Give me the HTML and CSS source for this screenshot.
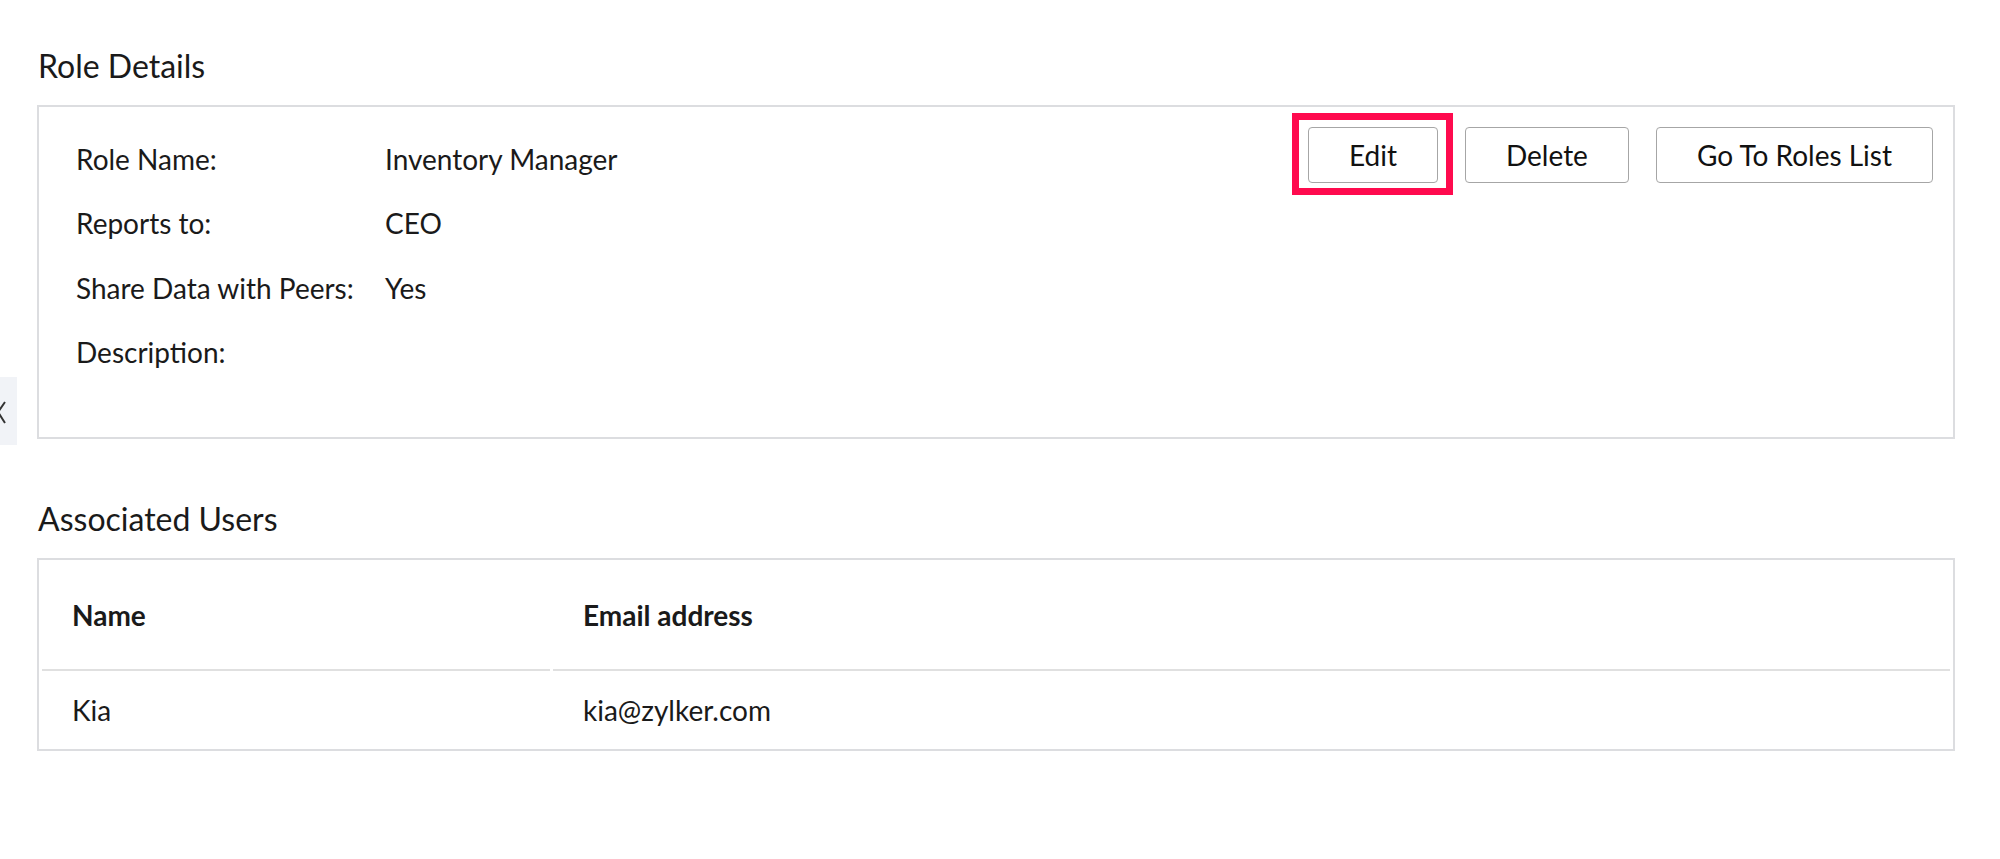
FILE: index.html
```html
<!DOCTYPE html>
<html>
<head>
<meta name="viewport" content="width=device-width, initial-scale=1">
<link rel="stylesheet" href="styles.css">
</head>
<body>

<div class="side_toggle">
  <svg width="17" height="68" viewBox="0 0 17 68">
    <path d="M5 25 L-2 35 L5 46" fill="none" stroke="#333" stroke-width="2"/>
  </svg>
</div>

<div class="page">
  <h2 class="section_title">Role Details</h2>
  <div class="card">
    <div class="details">
      <div class="label">Role Name:</div>
      <div class="value">Inventory Manager</div>
      <div class="label">Reports to:</div>
      <div class="value">CEO</div>
      <div class="label">Share Data with Peers:</div>
      <div class="value">Yes</div>
      <div class="label">Description:</div>
      <div class="value"></div>
    </div>
    <div class="actions">
      <button class="btn highlight">Edit</button>
      <button class="btn">Delete</button>
      <button class="btn">Go To Roles List</button>
    </div>
  </div>

  <h2 class="section_title users_title">Associated Users</h2>
  <table class="users">
    <thead>
      <tr>
        <th class="col_name">Name</th>
        <th>Email address</th>
      </tr>
    </thead>
    <tbody>
      <tr>
        <td>Kia</td>
        <td>kia@zylker.com</td>
      </tr>
    </tbody>
  </table>
</div>

</body>
</html>
```

FILE: styles.css
```css
body {
    margin: 0;
    font-family: Lato, "Open Sans", sans-serif;
    color: #1a1a1a;
    background: #fff;
}

.page {
    padding: 47px 45px 0 37px;
}

.section_title {
    font-size: 32px;
    font-weight: 400;
    line-height: 38px;
    margin: 0 0 20px 1px;
}

.users_title {
    margin-top: 61px;
}

.card {
    display: flex;
    justify-content: space-between;
    align-items: flex-start;
    border: 2px solid #dcdde0;
    height: 330px;
}

.details {
    display: grid;
    grid-template-columns: 309px auto;
    row-gap: 24.4px;
    padding: 32px 0 0 37px;
    font-size: 28px;
    line-height: 40px;
}

.actions {
    display: flex;
    gap: 27px;
    padding: 20px 20px 0 0;
}

.btn {
    font-family: Lato, "Open Sans", sans-serif;
    font-size: 28px;
    color: #111;
    background: #fff;
    border: 1.5px solid #a6a6a6;
    border-radius: 4px;
    height: 56px;
    padding: 0 40px;
}

.btn.highlight {
    position: relative;
}

/* red annotation frame round the Edit button */
.btn.highlight::after {
    content: "";
    position: absolute;
    top: -15px;
    right: -16px;
    bottom: -13px;
    left: -17px;
    border: 7px solid #ff0a4e;
}

.users {
    width: 100%;
    border: 2px solid #dcdde0;
    border-collapse: separate;
    border-spacing: 3px 0;
    font-size: 28px;
    line-height: 32px;
    text-align: left;
}

.users th {
    font-weight: 700;
    padding: 39px 0 38px 30px;
    border-bottom: 2px solid #e0e0e0;
}

.users .col_name {
    width: 478px;
}

.users td {
    padding: 23px 0 23px 30px;
}

.side_toggle {
    position: absolute;
    left: 0;
    top: 377px;
    width: 17px;
    height: 68px;
    background: #f1f3f7;
    overflow: hidden;
}

.side_toggle svg {
    display: block;
}
```
